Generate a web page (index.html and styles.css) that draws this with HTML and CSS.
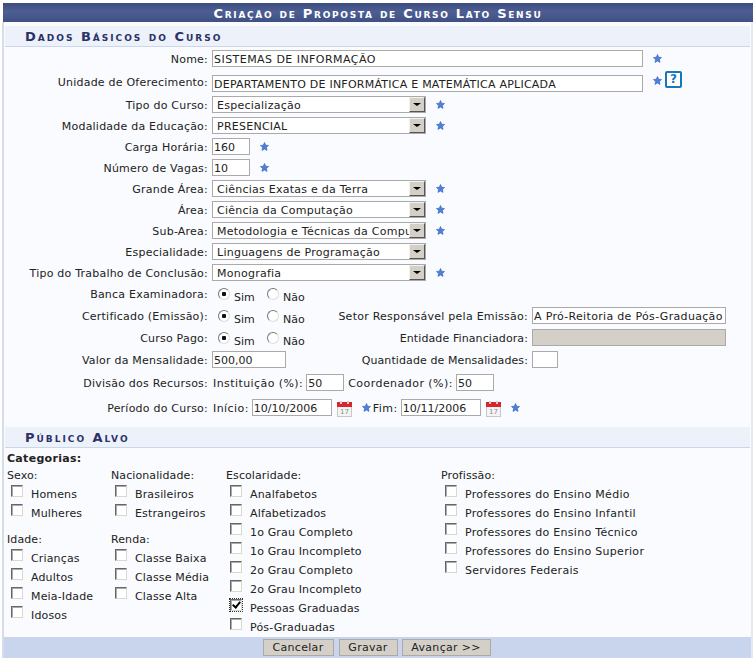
FILE: index.html
```html
<!DOCTYPE html>
<html lang="pt-BR">
<head>
    <meta charset="UTF-8">
    <title>Criação de Proposta de Curso Lato Sensu</title>
    <link rel="stylesheet" href="styles.css">
</head>
<body>
    <!-- Shared icon -->
    <svg class="defs" width="0" height="0">
        <symbol id="star" viewBox="0 0 11 11">
            <path d="M5.5 .6 7 3.9l3.5.4-2.6 2.4.7 3.6-3.1-1.8-3.1 1.8.7-3.6L.5 4.3 4 3.9z" fill="#4c80e0" stroke="#2f5fb0" stroke-width=".7"/>
        </symbol>
    </svg>

    <div class="page">
        <h2 class="title">Criação de Proposta de Curso Lato Sensu</h2>

        <div class="panel">
            <h3 class="section">Dados Básicos do Curso</h3>

            <form class="fields">
                <div class="row row-first">
                    <label class="lbl">Nome:</label>
                    <input class="txt w-long w-nome" type="text" value="SISTEMAS DE INFORMAÇÃO">
                    <svg class="star"><use href="#star"/></svg>
                </div>
                <div class="row">
                    <label class="lbl lbl-up">Unidade de Oferecimento:</label>
                    <input class="txt w-long" type="text" value="DEPARTAMENTO DE INFORMÁTICA E MATEMÁTICA APLICADA">
                    <svg class="star star-up"><use href="#star"/></svg>
                    <span class="help">?</span>
                </div>
                <div class="row">
                    <label class="lbl">Tipo do Curso:</label>
                    <div class="combo"><select><option>Especialização</option></select><span class="arrow"></span></div>
                    <svg class="star"><use href="#star"/></svg>
                </div>
                <div class="row">
                    <label class="lbl">Modalidade da Educação:</label>
                    <div class="combo"><select><option>PRESENCIAL</option></select><span class="arrow"></span></div>
                    <svg class="star"><use href="#star"/></svg>
                </div>
                <div class="row">
                    <label class="lbl">Carga Horária:</label>
                    <input class="txt w-short" type="text" value="160">
                    <svg class="star"><use href="#star"/></svg>
                </div>
                <div class="row">
                    <label class="lbl">Número de Vagas:</label>
                    <input class="txt w-short" type="text" value="10">
                    <svg class="star"><use href="#star"/></svg>
                </div>
                <div class="row">
                    <label class="lbl">Grande Área:</label>
                    <div class="combo"><select><option>Ciências Exatas e da Terra</option></select><span class="arrow"></span></div>
                    <svg class="star"><use href="#star"/></svg>
                </div>
                <div class="row">
                    <label class="lbl">Área:</label>
                    <div class="combo"><select><option>Ciência da Computação</option></select><span class="arrow"></span></div>
                    <svg class="star"><use href="#star"/></svg>
                </div>
                <div class="row">
                    <label class="lbl">Sub-Area:</label>
                    <div class="combo"><select><option>Metodologia e Técnicas da Computação</option></select><span class="arrow"></span></div>
                    <svg class="star"><use href="#star"/></svg>
                </div>
                <div class="row">
                    <label class="lbl">Especialidade:</label>
                    <div class="combo"><select><option>Linguagens de Programação</option></select><span class="arrow"></span></div>
                </div>
                <div class="row">
                    <label class="lbl">Tipo do Trabalho de Conclusão:</label>
                    <div class="combo"><select><option>Monografia</option></select><span class="arrow"></span></div>
                    <svg class="star"><use href="#star"/></svg>
                </div>

                <div class="row row-radio">
                    <label class="lbl">Banca Examinadora:</label>
                    <div class="main">
                        <input class="radio" type="radio" name="banca" checked><span class="opt">Sim</span>
                        <input class="radio" type="radio" name="banca"><span class="opt">Não</span>
                    </div>
                </div>
                <div class="row row-radio">
                    <label class="lbl">Certificado (Emissão):</label>
                    <div class="main">
                        <input class="radio" type="radio" name="cert" checked><span class="opt">Sim</span>
                        <input class="radio" type="radio" name="cert"><span class="opt">Não</span>
                    </div>
                    <label class="lbl2">Setor Responsável pela Emissão:</label>
                    <input class="txt w-side" type="text" value="A Pró-Reitoria de Pós-Graduação">
                </div>
                <div class="row row-radio">
                    <label class="lbl">Curso Pago:</label>
                    <div class="main">
                        <input class="radio" type="radio" name="pago" checked><span class="opt">Sim</span>
                        <input class="radio" type="radio" name="pago"><span class="opt">Não</span>
                    </div>
                    <label class="lbl2 lbl2-tight">Entidade Financiadora:</label>
                    <input class="txt w-side off" type="text" disabled>
                </div>
                <div class="row row-valor">
                    <label class="lbl">Valor da Mensalidade:</label>
                    <div class="main"><input class="txt w-valor" type="text" value="500,00"></div>
                    <label class="lbl2 lbl2-tight">Quantidade de Mensalidades:</label>
                    <input class="txt w-qtd" type="text">
                </div>
                <div class="row row-div">
                    <label class="lbl">Divisão dos Recursos:</label>
                    <span class="inline">Instituição (%):</span>
                    <input class="txt w-short" type="text" value="50">
                    <span class="inline coord">Coordenador (%):</span>
                    <input class="txt w-short" type="text" value="50">
                </div>
                <div class="row row-periodo">
                    <label class="lbl">Período do Curso:</label>
                    <span class="inline">Início:</span>
                    <input class="txt w-date" type="text" value="10/10/2006">
                    <svg class="cal" viewBox="0 0 15 16">
                        <rect x=".5" y="3" width="14" height="12.5" fill="#f4f4f4" stroke="#c8c8c8"/>
                        <rect x="0" y="1" width="15" height="5" fill="#d8242a"/>
                        <rect x="3" y="0" width="2" height="3" fill="#d0d0d0"/>
                        <rect x="10" y="0" width="2" height="3" fill="#d0d0d0"/>
                        <text x="3" y="13.4" font-size="7" fill="#8a8a8a">17</text>
                    </svg>
                    <svg class="star star-cal"><use href="#star"/></svg>
                    <span class="inline fim">Fim:</span>
                    <input class="txt w-date" type="text" value="10/11/2006">
                    <svg class="cal" viewBox="0 0 15 16">
                        <rect x=".5" y="3" width="14" height="12.5" fill="#f4f4f4" stroke="#c8c8c8"/>
                        <rect x="0" y="1" width="15" height="5" fill="#d8242a"/>
                        <rect x="3" y="0" width="2" height="3" fill="#d0d0d0"/>
                        <rect x="10" y="0" width="2" height="3" fill="#d0d0d0"/>
                        <text x="3" y="13.4" font-size="7" fill="#8a8a8a">17</text>
                    </svg>
                    <svg class="star star-cal"><use href="#star"/></svg>
                </div>
            </form>

            <h3 class="section">Público Alvo</h3>

            <div class="cats">
                <div class="cats-title">Categorias:</div>
                <div class="cats-cols">
                    <div class="col col-a">
                        <div class="group">
                            <div class="group-name">Sexo:</div>
                            <div class="item"><input type="checkbox"><span>Homens</span></div>
                            <div class="item"><input type="checkbox"><span>Mulheres</span></div>
                        </div>
                        <div class="group">
                            <div class="group-name">Idade:</div>
                            <div class="item"><input type="checkbox"><span>Crianças</span></div>
                            <div class="item"><input type="checkbox"><span>Adultos</span></div>
                            <div class="item"><input type="checkbox"><span>Meia-Idade</span></div>
                            <div class="item"><input type="checkbox"><span>Idosos</span></div>
                        </div>
                    </div>
                    <div class="col col-b">
                        <div class="group">
                            <div class="group-name">Nacionalidade:</div>
                            <div class="item"><input type="checkbox"><span>Brasileiros</span></div>
                            <div class="item"><input type="checkbox"><span>Estrangeiros</span></div>
                        </div>
                        <div class="group">
                            <div class="group-name">Renda:</div>
                            <div class="item"><input type="checkbox"><span>Classe Baixa</span></div>
                            <div class="item"><input type="checkbox"><span>Classe Média</span></div>
                            <div class="item"><input type="checkbox"><span>Classe Alta</span></div>
                        </div>
                    </div>
                    <div class="col col-c">
                        <div class="group">
                            <div class="group-name">Escolaridade:</div>
                            <div class="item"><input type="checkbox"><span>Analfabetos</span></div>
                            <div class="item"><input type="checkbox"><span>Alfabetizados</span></div>
                            <div class="item"><input type="checkbox"><span>1o Grau Completo</span></div>
                            <div class="item"><input type="checkbox"><span>1o Grau Incompleto</span></div>
                            <div class="item"><input type="checkbox"><span>2o Grau Completo</span></div>
                            <div class="item"><input type="checkbox"><span>2o Grau Incompleto</span></div>
                            <div class="item"><input type="checkbox" checked><span>Pessoas Graduadas</span></div>
                            <div class="item"><input type="checkbox"><span>Pós-Graduadas</span></div>
                        </div>
                    </div>
                    <div class="col col-d">
                        <div class="group">
                            <div class="group-name">Profissão:</div>
                            <div class="item"><input type="checkbox"><span>Professores do Ensino Médio</span></div>
                            <div class="item"><input type="checkbox"><span>Professores do Ensino Infantil</span></div>
                            <div class="item"><input type="checkbox"><span>Professores do Ensino Técnico</span></div>
                            <div class="item"><input type="checkbox"><span>Professores do Ensino Superior</span></div>
                            <div class="item"><input type="checkbox"><span>Servidores Federais</span></div>
                        </div>
                    </div>
                </div>
            </div>

            <div class="actions">
                <button type="button" class="btn btn-cancel">Cancelar</button>
                <button type="button" class="btn btn-save">Gravar</button>
                <button type="button" class="btn btn-next">Avançar &gt;&gt;</button>
            </div>
        </div>
    </div>
</body>
</html>
```

FILE: styles.css
```css
body {
    margin: 3px 0 0 2px;
    font-family: "DejaVu Sans", Verdana, sans-serif;
    font-size: 11px;
    line-height: 17px;
    color: #222;
    background-color: #fff;
}

.defs {
    position: absolute;
}

.page {
    width: 751px;
}

.title {
    margin: 0 0 0 1px;
    height: 19px;
    background: linear-gradient(#3c4c80, #4d5e92 45%, #3f5086);
    color: #fff;
    font-size: 13px;
    line-height: 21px;
    font-weight: bold;
    font-variant: small-caps;
    letter-spacing: 1.7px;
    text-align: center;
}

.panel {
    padding: 4px 1px 0;
    border-left: 2px solid #d5dcea;
    border-right: 2px solid #e4e9f2;
    background-color: #f9fbfe;
}

.section {
    margin: 0;
    height: 20px;
    padding-left: 20px;
    background-color: #edf1f9;
    border-bottom: 1px solid #c9d6ec;
    color: #2a3268;
    font-size: 13px;
    line-height: 22px;
    font-weight: bold;
    font-variant: small-caps;
    letter-spacing: 2px;
}

/* Form rows */
.fields {
    padding-top: 3px;
}

.row {
    display: flex;
    align-items: flex-start;
    height: 21px;
}

.row-first {
    height: 25px;
}

.row-radio {
    height: 22px;
}

.row-valor {
    height: 23px;
}

.row-div {
    height: 25px;
}

.row-periodo {
    height: 28px;
}

.lbl {
    width: 203px;
    margin-right: 4px;
    padding-top: 1px;
    text-align: right;
    white-space: nowrap;
    letter-spacing: .22px;
}

.lbl-up {
    padding-top: 0;
    margin-top: -1px;
}

.lbl2 {
    width: 196px;
    margin-right: 4px;
    padding-top: 1px;
    text-align: right;
    white-space: nowrap;
    letter-spacing: .25px;
}

.lbl2-tight {
    letter-spacing: .1px;
}

.main {
    display: flex;
    align-items: flex-start;
    width: 120px;
}

.txt {
    box-sizing: border-box;
    height: 17px;
    margin: 0;
    padding: 1px 1px 0;
    border: 1px solid #aaa;
    background-color: #fff;
    font-family: inherit;
    font-size: 11px;
    color: #222;
}

.w-long { width: 431px; letter-spacing: .24px; }
.w-nome { letter-spacing: .45px; }
.w-short { width: 38px; }
.w-side { width: 194px; letter-spacing: .32px; }
.w-valor { width: 74px; }
.w-qtd { width: 26px; }
.w-date { width: 80px; }

.off {
    background-color: #d4d0c8;
}

.inline {
    margin-left: 1px;
    margin-right: 3px;
    padding-top: 1px;
    white-space: nowrap;
    letter-spacing: .42px;
}

.coord {
    margin-left: 4px;
    letter-spacing: .46px;
}

.fim {
    margin-left: 2px;
    margin-right: 3px;
    letter-spacing: .5px;
}

/* Select with the old grey button */
.combo {
    position: relative;
    width: 214px;
    height: 17px;
}

.combo select {
    appearance: none;
    box-sizing: border-box;
    width: 100%;
    height: 17px;
    margin: 0;
    padding: 1px 16px 0 4px;
    border: 1px solid #aaa;
    border-radius: 0;
    background-color: #fff;
    font-family: inherit;
    font-size: 11px;
    letter-spacing: .25px;
    color: #222;
}

.arrow {
    position: absolute;
    top: 1px;
    right: 1px;
    box-sizing: border-box;
    width: 16px;
    height: 15px;
    background-color: #d4d0c8;
    border: 1px solid;
    border-color: #f4f2ee #555 #555 #f4f2ee;
}

.arrow::after {
    content: "";
    position: absolute;
    top: 5px;
    left: 3px;
    border-style: solid;
    border-width: 3px 4px 0;
    border-color: #000 transparent transparent;
}

/* Icons */
.star {
    flex: none;
    width: 9px;
    height: 9px;
    margin: 4px 0 0 10px;
}

.star-up {
    margin-top: 1px;
}

.star-cal {
    margin-top: 4px;
}

.help {
    box-sizing: border-box;
    width: 17px;
    height: 17px;
    margin: -4px 0 0 3px;
    border: 2px solid #1b75bb;
    border-radius: 2px;
    background-color: #fff;
    color: #1b75bb;
    font-size: 12px;
    line-height: 13px;
    font-weight: bold;
    text-align: center;
}

.cal {
    flex: none;
    width: 15px;
    height: 16px;
    margin: 2px 0 0 5px;
    font-family: "DejaVu Sans", sans-serif;
}

/* Radios */
.radio {
    appearance: none;
    box-sizing: border-box;
    flex: none;
    width: 12px;
    height: 12px;
    margin: 3px 0 0 6px;
    border: 1px solid;
    border-color: #777 #ddd #ddd #777;
    border-radius: 50%;
    background-color: #fff;
}

.radio:checked {
    background: radial-gradient(circle, #111 0 2px, #fff 2.5px);
}

.opt {
    margin: 4px 0 0 4px;
    width: 27px;
}

/* Categories */
.cats {
    padding: 2px 0 0 2px;
    height: 187px;
}

.cats-title {
    font-weight: bold;
    height: 17px;
    letter-spacing: .3px;
}

.cats-cols {
    display: flex;
}

.col-a { width: 104px; }
.col-b { width: 115px; }
.col-c { width: 215px; }

.group {
    margin-bottom: 9px;
}

.group-name {
    height: 17px;
    letter-spacing: .1px;
}

.item {
    display: flex;
    align-items: flex-start;
    height: 19px;
    white-space: nowrap;
    letter-spacing: .15px;
}

.col-d .item {
    letter-spacing: .3px;
}

.item input {
    appearance: none;
    box-sizing: border-box;
    flex: none;
    position: relative;
    width: 12px;
    height: 12px;
    margin: 1px 8px 0 4px;
    border: 1px solid;
    border-color: #666 #d8d8d0 #d8d8d0 #666;
    border-radius: 0;
    background-color: #fff;
    box-shadow: inset 1px 1px 0 #aaa;
}

.item input:checked {
    outline: 1px dotted #333;
}

.item input:checked::after {
    content: "";
    position: absolute;
    top: 0;
    left: 3px;
    width: 3px;
    height: 6px;
    border: solid #000;
    border-width: 0 2px 2px 0;
    transform: rotate(40deg);
}

.item span {
    margin-top: 2px;
}

/* Buttons */
.actions {
    display: flex;
    justify-content: center;
    gap: 4px;
    height: 21px;
    margin: 0 -1px;
    padding: 2px 2px 0 0;
    box-sizing: border-box;
    background-color: #c8d5ec;
}

.btn {
    box-sizing: border-box;
    height: 17px;
    margin: 0;
    padding: 0;
    border: 1px solid #aaa;
    background-color: #d4d0c8;
    font-family: inherit;
    font-size: 11px;
    color: #222;
    letter-spacing: .3px;
}

.btn-cancel { width: 71px; margin-right: 1px; }
.btn-save { width: 59px; }
.btn-next { width: 89px; }
```
